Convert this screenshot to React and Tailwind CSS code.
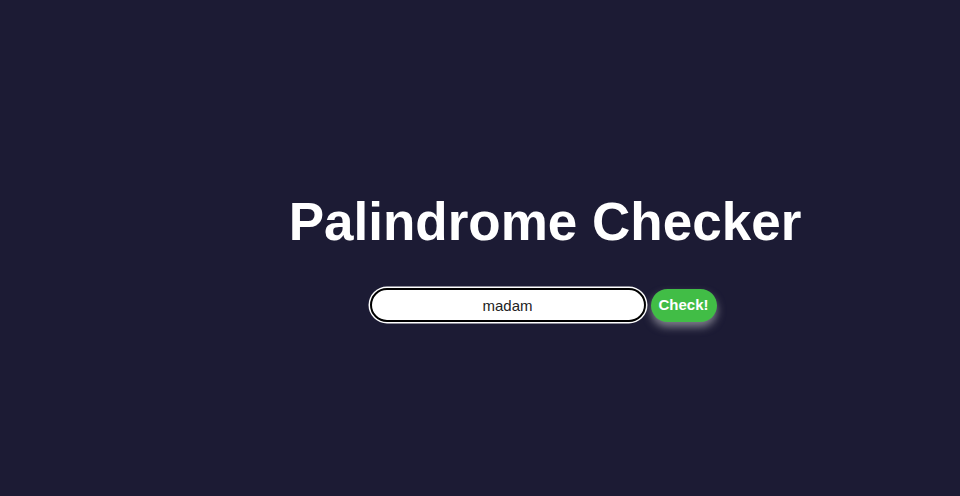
import React, { useState } from 'react';

export default function App() {
  const [text, setText] = useState('madam');

  return (
    <div
      className="min-h-screen w-full bg-[#1c1b34] pl-[130px] pt-[195px] flex flex-col items-center"
      style={{ fontFamily: '"Liberation Sans", Arial, sans-serif' }}
    >
      <h1 className="text-[53px] leading-none font-bold text-white">Palindrome Checker</h1>

      <div className="mt-[40px] mr-[4px] flex items-center gap-[5px]">
        <input
          value={text}
          onChange={(e) => setText(e.target.value)}
          className="w-[276px] h-[34px] rounded-full bg-white border-2 border-black ring-[1.5px] ring-white text-center text-[15px] text-[#222] outline-none"
        />
        <button className="h-[33px] w-[66px] rounded-full bg-[#41bd46] text-white font-bold text-[15px] shadow-[0_5px_8px_rgba(150,150,160,0.8)]">
          Check!
        </button>
      </div>
    </div>
  );
}
